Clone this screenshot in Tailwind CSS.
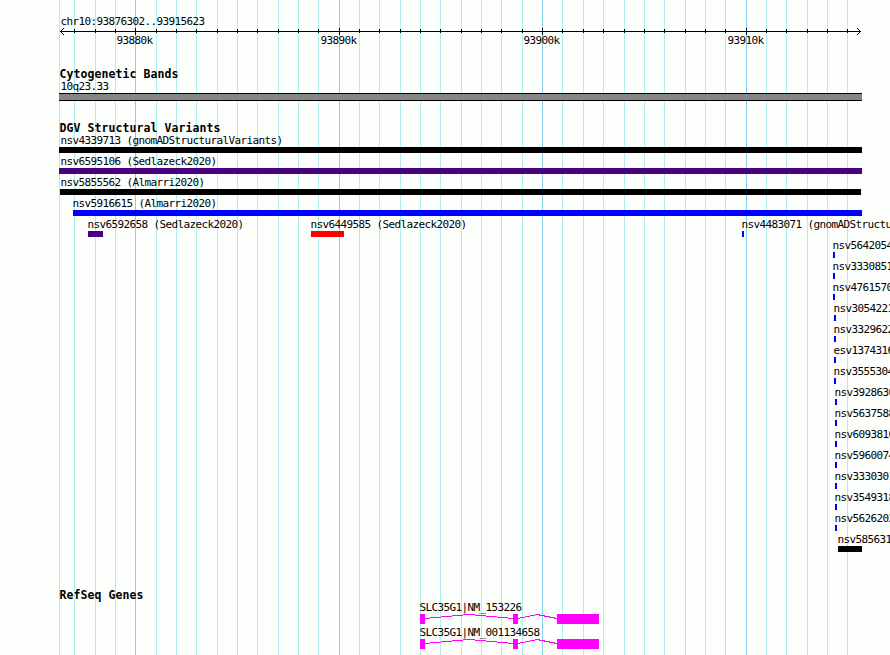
<!DOCTYPE html>
<html lang="en">
<head>
  <meta charset="UTF-8">
  <meta name="viewport" content="width=device-width, initial-scale=1.0">
  <title>chr10:93876302..93915623</title>
  <script src="https://cdn.jsdelivr.net/npm/@tailwindcss/browser@4"></script>
</head>
<body class="bg-[#fdfffc]">

<div class="relative w-[890px] h-[655px] overflow-hidden whitespace-nowrap text-black font-['DejaVu_Sans_Mono',monospace] text-[11px] leading-[14px] tracking-[-0.62px]">

  <!-- Grid lines -->
  <svg class="absolute inset-0" width="890" height="655" shape-rendering="crispEdges" fill="none">
    <path stroke="#afeeee" d="M59.5 0v655M74.5 0v655M95.5 0v655M115.5 0v655M156.5 0v655M176.5 0v655M196.5 0v655M217.5 0v655M237.5 0v655M257.5 0v655M278.5 0v655M298.5 0v655M318.5 0v655M359.5 0v655M379.5 0v655M400.5 0v655M420.5 0v655M440.5 0v655M461.5 0v655M481.5 0v655M501.5 0v655M522.5 0v655M562.5 0v655M583.5 0v655M603.5 0v655M624.5 0v655M644.5 0v655M664.5 0v655M685.5 0v655M705.5 0v655M725.5 0v655M766.5 0v655M786.5 0v655M807.5 0v655M827.5 0v655M847.5 0v655"/>
    <path stroke="#87ceeb" d="M135.5 0v655M339.5 0v655M542.5 0v655M746.5 0v655"/>
  </svg>

  <main class="relative">
    <!-- Ruler -->
    <section class="pt-[15px] h-[68px]">
      <div class="pl-[60.5px] h-3">chr10:93876302..93915623</div>
      <svg class="block" width="890" height="8" shape-rendering="crispEdges" fill="none" stroke="#000">
        <path d="M60 4.5h801"/>
        <path d="M60.5 4v1M61.5 3v1M61.5 5v1M62.5 2v1M62.5 6v1M63.5 1v1M63.5 7v1M860.5 4v1M859.5 3v1M859.5 5v1M858.5 2v1M858.5 6v1M857.5 1v1M857.5 7v1"/>
        <path d="M74.5 2v4M95.5 2v4M115.5 2v4M156.5 2v4M176.5 2v4M196.5 2v4M217.5 2v4M237.5 2v4M257.5 2v4M278.5 2v4M298.5 2v4M318.5 2v4M359.5 2v4M379.5 2v4M400.5 2v4M420.5 2v4M440.5 2v4M461.5 2v4M481.5 2v4M501.5 2v4M522.5 2v4M562.5 2v4M583.5 2v4M603.5 2v4M624.5 2v4M644.5 2v4M664.5 2v4M685.5 2v4M705.5 2v4M725.5 2v4M766.5 2v4M786.5 2v4M807.5 2v4M827.5 2v4M847.5 2v4"/>
        <path d="M135.5 1v7M339.5 1v7M542.5 1v7M746.5 1v7"/>
      </svg>
      <div class="flex pl-[116.5px] -mt-px">
        <span class="w-[204px]">93880k</span>
        <span class="w-[203px]">93890k</span>
        <span class="w-[204px]">93900k</span>
        <span>93910k</span>
      </div>
    </section>

    <!-- Cytogenetic bands -->
    <section class="h-[54px]">
      <h2 class="pl-[59.5px] font-bold text-[11.5px] leading-3 tracking-[0.08px] h-3">Cytogenetic Bands</h2>
      <div class="pl-[60.5px] h-[13px]">10q23.33</div>
      <div class="ml-[59px] w-[803px] h-2 bg-[#878387] border-y border-black"></div>
    </section>

    <!-- Structural variants -->
    <section class="h-[467px]">
      <h2 class="pl-[59.5px] font-bold text-[11.5px] leading-3 tracking-[0.08px] h-3">DGV Structural Variants</h2>
      <div class="h-[21px] pl-[59px]"><p class="h-[13px] pl-[1.5px]">nsv4339713 (gnomADStructuralVariants)</p><div class="w-[803px] h-1.5 bg-black"></div></div>
      <div class="h-[21px] pl-[59px]"><p class="h-[13px] pl-[1.5px]">nsv6595106 (Sedlazeck2020)</p><div class="w-[803px] h-1.5 bg-[#4b0082]"></div></div>
      <div class="h-[21px] pl-[60px]"><p class="h-[13px] pl-[0.5px]">nsv5855562 (Almarri2020)</p><div class="w-[801px] h-1.5 bg-black"></div></div>
      <div class="h-[21px] pl-[73px]"><p class="h-[13px] -ml-[0.5px]">nsv5916615 (Almarri2020)</p><div class="w-[789px] h-1.5 bg-[#0000ff]"></div></div>
      <div class="flex h-[21px] pl-[88px]">
        <div class="w-[223px] shrink-0"><p class="h-[13px] -ml-[0.5px]">nsv6592658 (Sedlazeck2020)</p><div class="w-[15px] h-1.5 bg-[#4b0082]"></div></div>
        <div class="w-[431px] shrink-0"><p class="h-[13px] -ml-[0.5px]">nsv6449585 (Sedlazeck2020)</p><div class="w-[33px] h-1.5 bg-[#ff0000]"></div></div>
        <div class="shrink-0"><p class="h-[13px] -ml-[0.5px]">nsv4483071 (gnomADStructuralVariants)</p><div class="w-0.5 h-1.5 bg-[#0000ff]"></div></div>
      </div>
      <div class="h-[21px] pl-[833px]"><p class="h-[13px] -ml-[0.5px]">nsv5642054</p><div class="w-0.5 h-1.5 bg-[#0000ff]"></div></div>
      <div class="h-[21px] pl-[833px]"><p class="h-[13px] -ml-[0.5px]">nsv3330851</p><div class="w-0.5 h-1.5 bg-[#0000ff]"></div></div>
      <div class="h-[21px] pl-[833px]"><p class="h-[13px] -ml-[0.5px]">nsv4761570</p><div class="w-0.5 h-1.5 bg-[#0000ff]"></div></div>
      <div class="h-[21px] pl-[834px]"><p class="h-[13px] -ml-[0.5px]">nsv3054221</p><div class="w-0.5 h-1.5 bg-[#0000ff]"></div></div>
      <div class="h-[21px] pl-[834px]"><p class="h-[13px] -ml-[0.5px]">nsv3329622</p><div class="w-0.5 h-1.5 bg-[#0000ff]"></div></div>
      <div class="h-[21px] pl-[834px]"><p class="h-[13px] -ml-[0.5px]">esv1374316</p><div class="w-0.5 h-1.5 bg-[#0000ff]"></div></div>
      <div class="h-[21px] pl-[834px]"><p class="h-[13px] -ml-[0.5px]">nsv3555304</p><div class="w-0.5 h-1.5 bg-[#0000ff]"></div></div>
      <div class="h-[21px] pl-[835px]"><p class="h-[13px] -ml-[0.5px]">nsv3928630</p><div class="w-0.5 h-1.5 bg-[#0000ff]"></div></div>
      <div class="h-[21px] pl-[835px]"><p class="h-[13px] -ml-[0.5px]">nsv5637588</p><div class="w-0.5 h-1.5 bg-[#0000ff]"></div></div>
      <div class="h-[21px] pl-[835px]"><p class="h-[13px] -ml-[0.5px]">nsv6093810</p><div class="w-0.5 h-1.5 bg-[#0000ff]"></div></div>
      <div class="h-[21px] pl-[835px]"><p class="h-[13px] -ml-[0.5px]">nsv5960074</p><div class="w-0.5 h-1.5 bg-[#0000ff]"></div></div>
      <div class="h-[21px] pl-[835px]"><p class="h-[13px] -ml-[0.5px]">nsv3330301</p><div class="w-0.5 h-1.5 bg-[#0000ff]"></div></div>
      <div class="h-[21px] pl-[835px]"><p class="h-[13px] -ml-[0.5px]">nsv3549318</p><div class="w-0.5 h-1.5 bg-[#0000ff]"></div></div>
      <div class="h-[21px] pl-[835px]"><p class="h-[13px] -ml-[0.5px]">nsv5626202</p><div class="w-0.5 h-1.5 bg-[#0000ff]"></div></div>
      <div class="h-[21px] pl-[838px]"><p class="h-[13px] -ml-[0.5px]">nsv585631</p><div class="w-6 h-1.5 bg-black"></div></div>
    </section>

    <!-- RefSeq genes -->
    <section>
      <h2 class="pl-[59.5px] font-bold text-[11.5px] leading-3 tracking-[0.08px] h-3">RefSeq Genes</h2>
      <div class="h-[25px] pl-[420px]">
        <p class="h-[13px] -ml-[0.5px]">SLC35G1|NM_153226</p>
        <svg class="block" width="179" height="10" shape-rendering="crispEdges" fill="#ff00ff">
          <path d="M0 0h5v10h-5zM93 0h5v10h-5zM137 0h42v10h-42z"/>
          <path fill="none" stroke="#ff00ff" d="M5 4.5L49 .5L93 4.5M98 4.5L117 .5L137 4.5"/>
        </svg>
      </div>
      <div class="h-[25px] pl-[420px]">
        <p class="h-[13px] -ml-[0.5px]">SLC35G1|NM_001134658</p>
        <svg class="block" width="179" height="10" shape-rendering="crispEdges" fill="#ff00ff">
          <path d="M0 0h5v10h-5zM93 0h5v10h-5zM137 0h42v10h-42z"/>
          <path fill="none" stroke="#ff00ff" d="M5 4.5L49 .5L93 4.5M98 4.5L117 .5L137 4.5"/>
        </svg>
      </div>
    </section>
  </main>
</div>

</body>
</html>
